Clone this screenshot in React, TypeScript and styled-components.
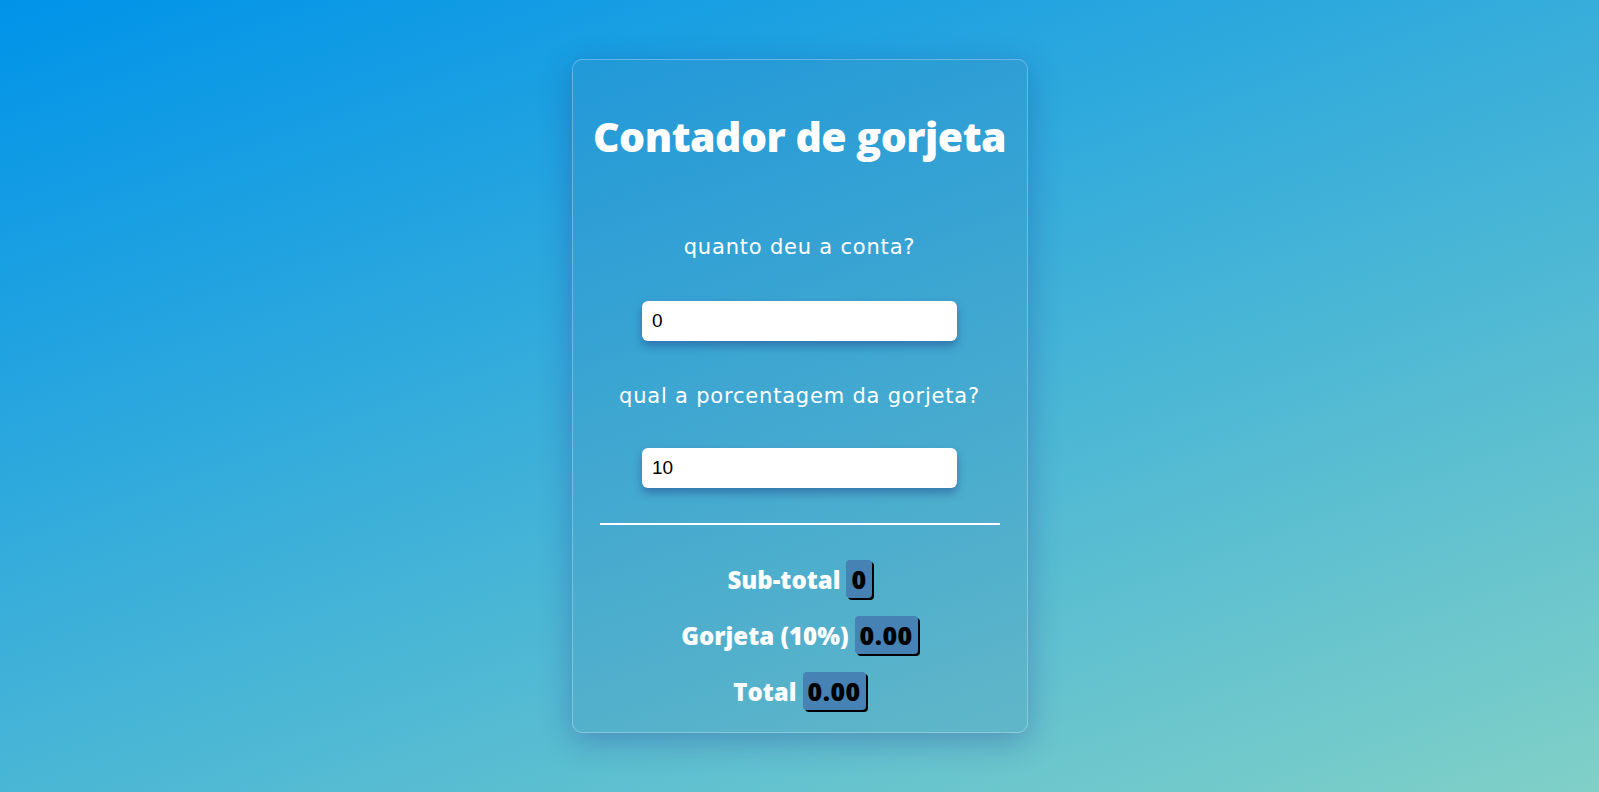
import * as React from 'react';
import styled, { createGlobalStyle } from 'styled-components';

const GlobalStyle = createGlobalStyle`
  * {
    box-sizing: border-box;
  }

  body {
    margin: 0;
    font-family: 'Open Sans', 'DejaVu Sans', sans-serif;
  }
`;

const Page = styled.div`
  width: 100%;
  min-height: 100vh;
  display: flex;
  justify-content: center;
  align-items: center;
  background-image: linear-gradient(160deg, #0093e9 0%, #80d0c7 100%);
`;

const Card = styled.div`
  width: 456px;
  height: 674px;
  padding: 46px 0 22px;
  display: flex;
  flex-direction: column;
  align-items: center;
  border-radius: 10px;
  border: 1px solid rgba(255, 255, 255, 0.28);
  background-color: rgba(70, 130, 180, 0.2);
  box-shadow: 0 8px 32px rgba(31, 38, 135, 0.3);
  color: white;
`;

const Title = styled.h1`
  margin: 0;
  height: 60px;
  line-height: 60px;
  font-size: 41px;
  font-weight: 800;
  letter-spacing: -0.5px;
  white-space: nowrap;
`;

const Label = styled.label<{ top: number }>`
  margin-top: ${(props) => props.top}px;
  height: 30px;
  line-height: 30px;
  font-family: 'DejaVu Sans', 'Open Sans', sans-serif;
  font-size: 21px;
  font-weight: 400;
  letter-spacing: 0.8px;
  white-space: nowrap;
`;

const Input = styled.input<{ top: number }>`
  margin-top: ${(props) => props.top}px;
  width: 315px;
  height: 40px;
  padding: 0 10px;
  border: none;
  border-radius: 6px;
  background: white;
  font-family: 'Liberation Sans', Arial, sans-serif;
  font-size: 19px;
  color: black;
  box-shadow: 0 5px 8px rgba(30, 60, 130, 0.45);
  outline: none;
`;

const Divider = styled.hr`
  margin: 35px 0 0;
  width: 400px;
  height: 2px;
  border: none;
  background: white;
`;

const Results = styled.div`
  margin-top: 35px;
  display: flex;
  flex-direction: column;
  align-items: center;
  gap: 18px;
`;

const Row = styled.div`
  height: 38px;
  display: flex;
  align-items: center;
  gap: 6px;
  font-size: 24px;
  font-weight: 800;
`;

const Value = styled.span`
  height: 38px;
  line-height: 38px;
  padding: 0 5px;
  border-radius: 4px;
  background-color: steelblue;
  box-shadow: 2px 2px 0 black;
  color: black;
  font-size: 25px;
  font-weight: 800;
  letter-spacing: 0.5px;
`;

export default function App() {
  const [bill, setBill] = React.useState('0');
  const [tip, setTip] = React.useState('10');

  const subtotal = Number(bill) || 0;
  const tipValue = (subtotal * (Number(tip) || 0)) / 100;

  return (
    <>
      <GlobalStyle />
      <Page>
        <Card>
          <Title>Contador de gorjeta</Title>
          <Label top={66}>quanto deu a conta?</Label>
          <Input top={39} type="text" value={bill} onChange={(evt) => setBill(evt.target.value)} />
          <Label top={40}>qual a porcentagem da gorjeta?</Label>
          <Input top={37} type="text" value={tip} onChange={(evt) => setTip(evt.target.value)} />
          <Divider />
          <Results>
            <Row>
              Sub-total <Value>{bill}</Value>
            </Row>
            <Row>
              Gorjeta ({tip}%) <Value>{tipValue.toFixed(2)}</Value>
            </Row>
            <Row>
              Total <Value>{(subtotal + tipValue).toFixed(2)}</Value>
            </Row>
          </Results>
        </Card>
      </Page>
    </>
  );
}
